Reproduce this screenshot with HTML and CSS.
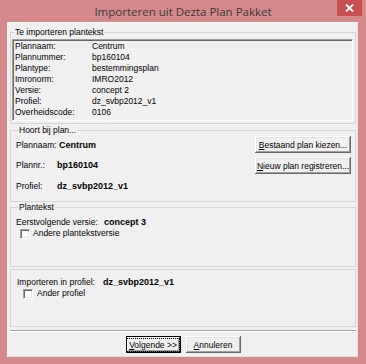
FILE: index.html
```html
<!DOCTYPE html>
<html lang="nl">
  <head>
    <meta charset="UTF-8" />
    <title>Importeren uit Dezta Plan Pakket</title>
    <link rel="stylesheet" href="styles.css">
  </head>
  <body>
    <div class="window">
      <!-- titelbalk -->
      <div class="titlebar">
        <span></span>
        <span class="title">Importeren uit Dezta Plan Pakket</span>
        <span class="close-btn">
          <svg width="9" height="8" viewBox="0 0 9 8">
            <path d="M1 0.5 L8 7.5 M8 0.5 L1 7.5" stroke="#fff" stroke-width="1.8" />
          </svg>
        </span>
      </div>

      <div class="client">
        <!-- start plantekst -->
        <fieldset class="group group-plantekst">
          <legend>Te importeren plantekst</legend>
          <div class="info-panel">
            <span>Plannaam:</span><span>Centrum</span>
            <span>Plannummer:</span><span>bp160104</span>
            <span>Plantype:</span><span>bestemmingsplan</span>
            <span>Imronorm:</span><span>IMRO2012</span>
            <span>Versie:</span><span>concept 2</span>
            <span>Profiel:</span><span>dz_svbp2012_v1</span>
            <span>Overheidscode:</span><span>0106</span>
          </div>
        </fieldset>
        <!-- end plantekst -->

        <!-- start hoort bij plan -->
        <fieldset class="group group-plan">
          <legend>Hoort bij plan...</legend>
          <div class="plan-body">
            <div class="plan-info">
              <span class="plan-first">Plannaam: <b>Centrum</b></span>
              <span></span>
              <span>Plannr.:</span><b>bp160104</b>
              <span>Profiel:</span><b>dz_svbp2012_v1</b>
            </div>
            <div class="plan-buttons">
              <button class="win-btn wide-btn"><u>B</u>estaand plan kiezen...</button>
              <button class="win-btn wide-btn"><u>N</u>ieuw plan registreren...</button>
            </div>
          </div>
        </fieldset>
        <!-- end hoort bij plan -->

        <fieldset class="group group-tekst">
          <legend>Plantekst</legend>
          <div class="line">Eerstvolgende versie: <b>concept 3</b></div>
          <label class="check-row check-tekst">
            <span class="check-box"></span>Andere plantekstversie
          </label>
        </fieldset>

        <fieldset class="group group-profiel">
          <div class="profiel-line">
            <span>Importeren in profiel:</span><b>dz_svbp2012_v1</b>
          </div>
          <label class="check-row check-profiel">
            <span class="check-box"></span>Ander profiel
          </label>
        </fieldset>

        <div class="separator"></div>

        <div class="actions">
          <button class="win-btn small-btn default-btn"><span class="focus"><u>V</u>olgende &gt;&gt;</span></button>
          <button class="win-btn small-btn"><u>A</u>nnuleren</button>
        </div>
      </div>
    </div>
  </body>
</html>
```

FILE: styles.css
```css
body {
  margin: 0;
  background: #fff;
}
.window {
  box-sizing: border-box;
  width: 366px;
  height: 364px;
  background-color: #d48a8b;
  display: flex;
  flex-direction: column;
  font-family: "Liberation Sans", Arial, sans-serif;
  font-size: 8.5px;
  line-height: 11px;
  color: #000;
}
.titlebar {
  height: 22px;
  display: grid;
  grid-template-columns: 1fr auto 1fr;
}
.title {
  font-family: "Open Sans", "Liberation Sans", sans-serif;
  font-size: 11.5px;
  line-height: 24px;
  color: #3a3a3a;
}
.close-btn {
  justify-self: end;
  width: 25px;
  height: 16px;
  margin-right: 4px;
  background-color: #c74f4f;
  display: flex;
  align-items: center;
  justify-content: center;
}
.client {
  flex: 1;
  margin: 0 8px 7px 7px;
  padding: 5px 2px 0 3px;
  background-color: #f0f0f0;
  box-shadow: inset 1px 1px #fafafa, inset -1px -1px #e3e3e3;
  display: flex;
  flex-direction: column;
}
.group {
  margin: 0;
  padding: 0;
  min-width: 0;
  border: 1px solid #d5d5d5;
}
.group legend {
  margin-left: 2px;
  padding: 0 1px;
  line-height: 11px;
}
.group-plantekst {
  padding: 0 2px 2px 1px;
}
.info-panel {
  margin-top: 1px;
  padding: 1px 0 2px 2px;
  border: 1px solid;
  border-color: #a0a0a0 #fff #fff #a0a0a0;
  box-shadow: inset 1px 1px #696969;
  display: grid;
  grid-template-columns: 77px 1fr;
  grid-auto-rows: 11px;
}
.group-plan {
  margin-top: 1px;
  padding: 0 4px 4px 5px;
}
.plan-body {
  display: flex;
  justify-content: space-between;
}
.plan-info {
  display: grid;
  grid-template-columns: 41px auto;
  grid-template-rows: 19px 21px 21px;
  align-items: center;
}
.plan-first {
  white-space: nowrap;
}
.plan-info b {
  font-size: 9px;
}
.plan-buttons {
  display: flex;
  flex-direction: column;
  gap: 4px;
}
.win-btn {
  box-sizing: border-box;
  height: 17px;
  padding: 0;
  border: none;
  background-color: #f0f0f0;
  font-family: "Liberation Sans", Arial, sans-serif;
  font-size: 8.5px;
  color: #000;
  box-shadow: inset -1px -1px #696969, inset 1px 1px #fff, inset -2px -2px #a0a0a0, inset 2px 2px #e3e3e3;
}
.wide-btn {
  width: 96px;
}
.group-tekst {
  padding: 4px 0 27px 5px;
}
.group-tekst b {
  font-size: 9px;
  margin-left: 4px;
}
.check-row {
  display: flex;
  align-items: center;
  height: 11px;
}
.check-box {
  box-sizing: border-box;
  width: 10px;
  height: 10px;
  background: #fff;
  border: 1px solid;
  border-color: #a0a0a0 #fff #fff #a0a0a0;
  box-shadow: inset 1px 1px #696969, inset -1px -1px #e3e3e3;
}
.check-tekst {
  padding-left: 4px;
  gap: 3px;
}
.group-profiel {
  margin-top: 2px;
  padding: 7px 0 27px 6px;
}
.profiel-line {
  display: flex;
  gap: 8px;
}
.profiel-line b {
  font-size: 9px;
}
.check-profiel {
  padding-left: 6px;
  gap: 4px;
}
.separator {
  margin-top: 3px;
  height: 1px;
  background-color: #a0a0a0;
  border-bottom: 1px solid #fff;
}
.actions {
  margin-top: 4px;
  display: flex;
  justify-content: center;
  gap: 5px;
}
.small-btn {
  width: 55px;
}
.default-btn {
  box-shadow: inset 0 0 0 1px #000, inset -2px -2px #696969, inset 2px 2px #fff, inset -3px -3px #a0a0a0;
}
.focus {
  padding: 1px 2px;
  outline: 1px dotted #000;
}
```
